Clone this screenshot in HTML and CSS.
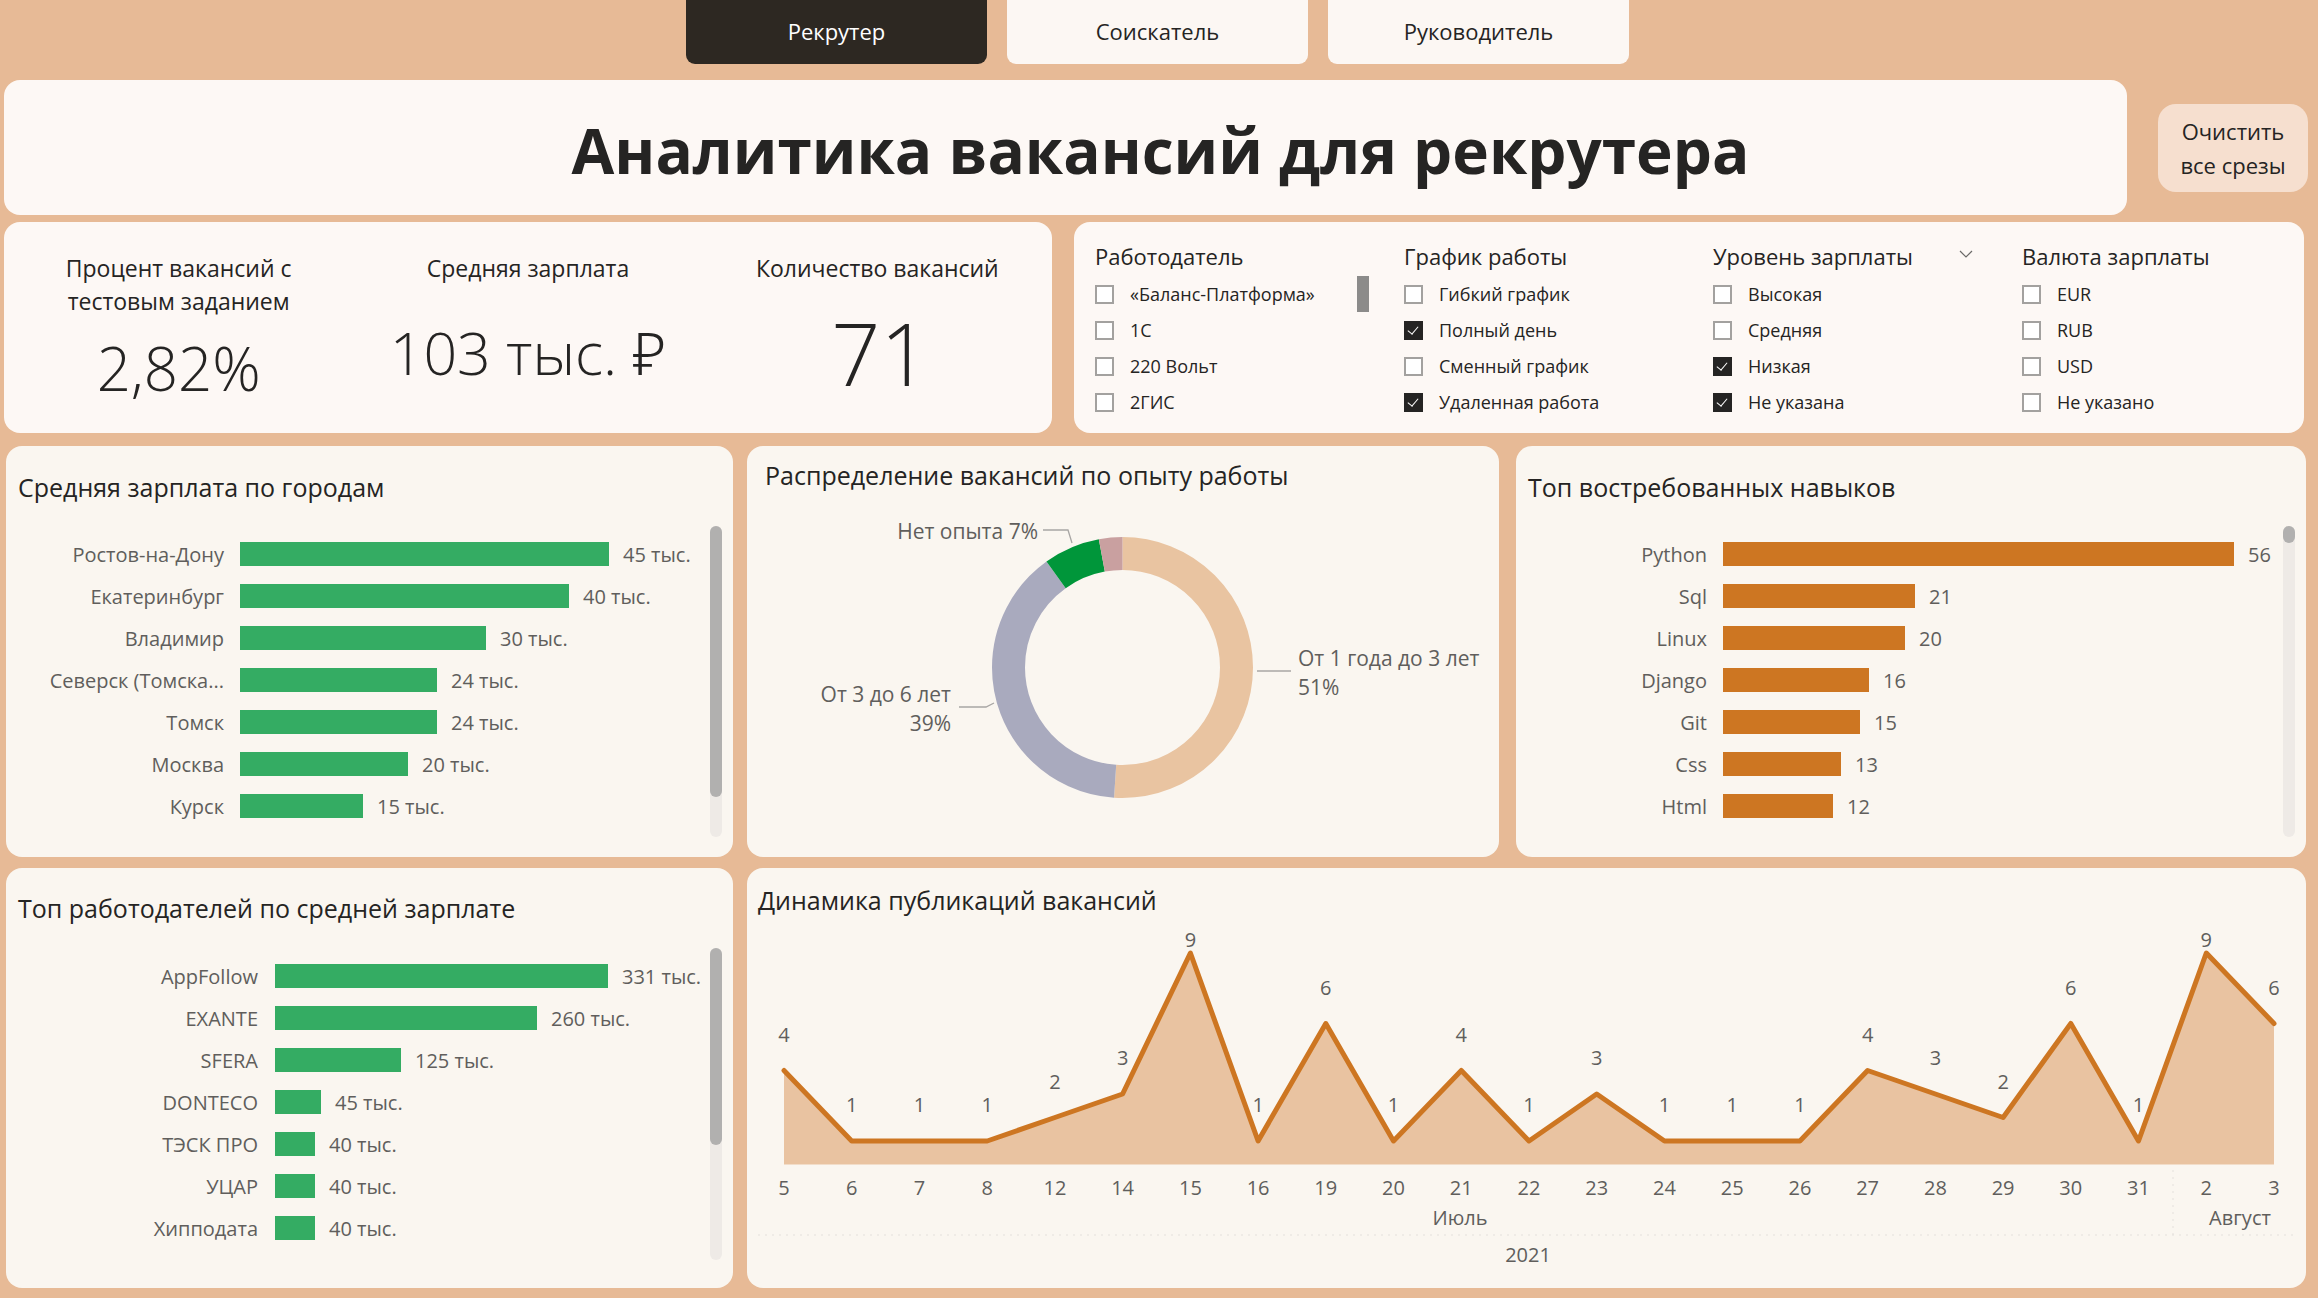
FILE: index.html
```html
<!DOCTYPE html>
<html lang="ru">
<head>
<meta charset="utf-8">
<title>Аналитика вакансий для рекрутера</title>
<link rel="stylesheet" href="styles.css">
</head>
<body>
<div class="page">
  <nav class="tabs">
    <div class="tab tab-active">Рекрутер</div>
    <div class="tab">Соискатель</div>
    <div class="tab">Руководитель</div>
  </nav>

  <header class="head-row">
    <div class="title-card"><h1>Аналитика вакансий для рекрутера</h1></div>
    <button class="clear-btn">Очистить<br>все срезы</button>
  </header>

  <section class="row kpi-row">
    <div class="card kpi-card">
      <div class="kpi">
        <div class="kpi-label">Процент вакансий с<br>тестовым заданием</div>
        <div class="kpi-value kv-1">2,82%</div>
      </div>
      <div class="kpi">
        <div class="kpi-label">Средняя зарплата</div>
        <div class="kpi-value kv-2">103 тыс. ₽</div>
      </div>
      <div class="kpi">
        <div class="kpi-label">Количество вакансий</div>
        <div class="kpi-value kv-3">71</div>
      </div>
    </div>

    <div class="card filter-card">
      <div class="slicer">
        <div class="slicer-head">Работодатель</div>
        <ul class="slicer-list">
          <li><span class="cb"></span>«Баланс-Платформа»</li>
          <li><span class="cb"></span>1С</li>
          <li><span class="cb"></span>220 Вольт</li>
          <li><span class="cb"></span>2ГИС</li>
        </ul>
        <span class="slicer-scroll"></span>
      </div>
      <div class="slicer">
        <div class="slicer-head">График работы</div>
        <ul class="slicer-list">
          <li><span class="cb"></span>Гибкий график</li>
          <li><span class="cb checked"></span>Полный день</li>
          <li><span class="cb"></span>Сменный график</li>
          <li><span class="cb checked"></span>Удаленная работа</li>
        </ul>
      </div>
      <div class="slicer">
        <div class="slicer-head head-flex"><span>Уровень зарплаты</span>
          <svg class="chev" width="14" height="9" viewBox="0 0 14 9"><polyline points="1,1 7,7 13,1" fill="none" stroke="#6b6a68" stroke-width="1.2"/></svg>
        </div>
        <ul class="slicer-list">
          <li><span class="cb"></span>Высокая</li>
          <li><span class="cb"></span>Средняя</li>
          <li><span class="cb checked"></span>Низкая</li>
          <li><span class="cb checked"></span>Не указана</li>
        </ul>
      </div>
      <div class="slicer">
        <div class="slicer-head">Валюта зарплаты</div>
        <ul class="slicer-list">
          <li><span class="cb"></span>EUR</li>
          <li><span class="cb"></span>RUB</li>
          <li><span class="cb"></span>USD</li>
          <li><span class="cb"></span>Не указано</li>
        </ul>
      </div>
    </div>
  </section>

  <section class="row mid-row">
    <div class="card chart-card city-card">
      <h2 class="card-title">Средняя зарплата по городам</h2>
      <div class="bars">
        <div class="bar-row"><span class="bar-label">Ростов-на-Дону</span><span class="bar green" style="width:369px"></span><span class="bar-value">45 тыс.</span></div>
        <div class="bar-row"><span class="bar-label">Екатеринбург</span><span class="bar green" style="width:329px"></span><span class="bar-value">40 тыс.</span></div>
        <div class="bar-row"><span class="bar-label">Владимир</span><span class="bar green" style="width:246px"></span><span class="bar-value">30 тыс.</span></div>
        <div class="bar-row"><span class="bar-label">Северск (Томска...</span><span class="bar green" style="width:197px"></span><span class="bar-value">24 тыс.</span></div>
        <div class="bar-row"><span class="bar-label">Томск</span><span class="bar green" style="width:197px"></span><span class="bar-value">24 тыс.</span></div>
        <div class="bar-row"><span class="bar-label">Москва</span><span class="bar green" style="width:168px"></span><span class="bar-value">20 тыс.</span></div>
        <div class="bar-row"><span class="bar-label">Курск</span><span class="bar green" style="width:123px"></span><span class="bar-value">15 тыс.</span></div>
      </div>
      <div class="vscroll"><span class="thumb thumb-city"></span></div>
    </div>

    <div class="card chart-card donut-card">
      <h2 class="card-title">Распределение вакансий по опыту работы</h2>
      <svg class="donut" width="752" height="365" viewBox="0 0 752 365">
        <g transform="rotate(-90 375.5 176.5)" fill="none" stroke-width="33">
          <circle cx="375.5" cy="176.5" r="114" stroke="#E9C4A1" stroke-dasharray="365.3 716.3" stroke-dashoffset="0"/>
          <circle cx="375.5" cy="176.5" r="114" stroke="#A9AABE" stroke-dasharray="279.4 716.3" stroke-dashoffset="-365.3"/>
          <circle cx="375.5" cy="176.5" r="114" stroke="#00963A" stroke-dasharray="50.1 716.3" stroke-dashoffset="-644.7"/>
          <circle cx="375.5" cy="176.5" r="114" stroke="#C9A0A0" stroke-dasharray="21.5 716.3" stroke-dashoffset="-694.8"/>
        </g>
        <g fill="none" stroke="#A8A6A4" stroke-width="1.3">
          <polyline points="296,39 321,39 325,52"/>
          <polyline points="510,180 544,180"/>
          <polyline points="212,216 239,216 247,212"/>
        </g>
        <g class="svg-label donut-label">
          <text x="291" y="40" text-anchor="end">Нет опыта 7%</text>
          <text x="551" y="167">От 1 года до 3 лет</text>
          <text x="551" y="196">51%</text>
          <text x="204" y="203" text-anchor="end">От 3 до 6 лет</text>
          <text x="204" y="232" text-anchor="end">39%</text>
        </g>
      </svg>
    </div>

    <div class="card chart-card skills-card">
      <h2 class="card-title">Топ востребованных навыков</h2>
      <div class="bars">
        <div class="bar-row"><span class="bar-label">Python</span><span class="bar orange" style="width:511px"></span><span class="bar-value">56</span></div>
        <div class="bar-row"><span class="bar-label">Sql</span><span class="bar orange" style="width:192px"></span><span class="bar-value">21</span></div>
        <div class="bar-row"><span class="bar-label">Linux</span><span class="bar orange" style="width:182px"></span><span class="bar-value">20</span></div>
        <div class="bar-row"><span class="bar-label">Django</span><span class="bar orange" style="width:146px"></span><span class="bar-value">16</span></div>
        <div class="bar-row"><span class="bar-label">Git</span><span class="bar orange" style="width:137px"></span><span class="bar-value">15</span></div>
        <div class="bar-row"><span class="bar-label">Css</span><span class="bar orange" style="width:118px"></span><span class="bar-value">13</span></div>
        <div class="bar-row"><span class="bar-label">Html</span><span class="bar orange" style="width:110px"></span><span class="bar-value">12</span></div>
      </div>
      <div class="vscroll"><span class="thumb thumb-skills"></span></div>
    </div>
  </section>

  <section class="row bottom-row">
    <div class="card chart-card emp-card">
      <h2 class="card-title">Топ работодателей по средней зарплате</h2>
      <div class="bars">
        <div class="bar-row"><span class="bar-label">AppFollow</span><span class="bar green" style="width:333px"></span><span class="bar-value">331 тыс.</span></div>
        <div class="bar-row"><span class="bar-label">EXANTE</span><span class="bar green" style="width:262px"></span><span class="bar-value">260 тыс.</span></div>
        <div class="bar-row"><span class="bar-label">SFERA</span><span class="bar green" style="width:126px"></span><span class="bar-value">125 тыс.</span></div>
        <div class="bar-row"><span class="bar-label">DONTECO</span><span class="bar green" style="width:46px"></span><span class="bar-value">45 тыс.</span></div>
        <div class="bar-row"><span class="bar-label">ТЭСК ПРО</span><span class="bar green" style="width:40px"></span><span class="bar-value">40 тыс.</span></div>
        <div class="bar-row"><span class="bar-label">УЦАР</span><span class="bar green" style="width:40px"></span><span class="bar-value">40 тыс.</span></div>
        <div class="bar-row"><span class="bar-label">Хипподата</span><span class="bar green" style="width:40px"></span><span class="bar-value">40 тыс.</span></div>
      </div>
      <div class="vscroll vscroll-emp"><span class="thumb thumb-emp"></span></div>
    </div>

    <div class="card chart-card line-card">
      <h2 class="card-title">Динамика публикаций вакансий</h2>
      <svg class="linechart" width="1559" height="372" viewBox="0 0 1559 372">
        <polygon fill="#E9C3A1" points="37,154.5 104.7,225 172.5,225 240.2,225 307.9,201.5 375.6,178 443.4,37 511.1,225 578.8,107.5 646.5,225 714.3,154.5 782,225 849.7,178 917.5,225 985.2,225 1052.9,225 1120.6,154.5 1188.4,178 1256.1,201.5 1323.8,107.5 1391.5,225 1459.3,37 1527,107.5 1527,248.5 37,248.5"/>
        <polyline fill="none" stroke="#CD7622" stroke-width="5" stroke-linejoin="round" stroke-linecap="round" points="37,154.5 104.7,225 172.5,225 240.2,225 307.9,201.5 375.6,178 443.4,37 511.1,225 578.8,107.5 646.5,225 714.3,154.5 782,225 849.7,178 917.5,225 985.2,225 1052.9,225 1120.6,154.5 1188.4,178 1256.1,201.5 1323.8,107.5 1391.5,225 1459.3,37 1527,107.5"/>
        <line x1="11" y1="319" x2="1551" y2="319" stroke="#E4E0DC" stroke-width="1" stroke-dasharray="2 5"/>
        <line x1="1426" y1="254" x2="1426" y2="319" stroke="#E4E0DC" stroke-width="1" stroke-dasharray="2 5"/>
        <g class="svg-label" text-anchor="middle">
          <text x="37" y="118">4</text>
          <text x="104.7" y="188.5">1</text>
          <text x="172.5" y="188.5">1</text>
          <text x="240.2" y="188.5">1</text>
          <text x="307.9" y="165">2</text>
          <text x="375.6" y="141.5">3</text>
          <text x="443.4" y="23">9</text>
          <text x="511.1" y="188.5">1</text>
          <text x="578.8" y="71">6</text>
          <text x="646.5" y="188.5">1</text>
          <text x="714.3" y="118">4</text>
          <text x="782" y="188.5">1</text>
          <text x="849.7" y="141.5">3</text>
          <text x="917.5" y="188.5">1</text>
          <text x="985.2" y="188.5">1</text>
          <text x="1052.9" y="188.5">1</text>
          <text x="1120.6" y="118">4</text>
          <text x="1188.4" y="141.5">3</text>
          <text x="1256.1" y="165">2</text>
          <text x="1323.8" y="71">6</text>
          <text x="1391.5" y="188.5">1</text>
          <text x="1459.3" y="23">9</text>
          <text x="1527" y="71">6</text>
        </g>
        <g class="svg-label" text-anchor="middle">
          <text x="37" y="271">5</text>
          <text x="104.7" y="271">6</text>
          <text x="172.5" y="271">7</text>
          <text x="240.2" y="271">8</text>
          <text x="307.9" y="271">12</text>
          <text x="375.6" y="271">14</text>
          <text x="443.4" y="271">15</text>
          <text x="511.1" y="271">16</text>
          <text x="578.8" y="271">19</text>
          <text x="646.5" y="271">20</text>
          <text x="714.3" y="271">21</text>
          <text x="782" y="271">22</text>
          <text x="849.7" y="271">23</text>
          <text x="917.5" y="271">24</text>
          <text x="985.2" y="271">25</text>
          <text x="1052.9" y="271">26</text>
          <text x="1120.6" y="271">27</text>
          <text x="1188.4" y="271">28</text>
          <text x="1256.1" y="271">29</text>
          <text x="1323.8" y="271">30</text>
          <text x="1391.5" y="271">31</text>
          <text x="1459.3" y="271">2</text>
          <text x="1527" y="271">3</text>
          <text x="713" y="301">Июль</text>
          <text x="1493" y="301">Август</text>
          <text x="781" y="338">2021</text>
        </g>
      </svg>
    </div>
  </section>
</div>
</body>
</html>
```

FILE: styles.css
```css
* {
  box-sizing: border-box;
  margin: 0;
  padding: 0;
}

body {
  margin: 0;
  width: 2318px;
  height: 1298px;
  overflow: hidden;
  background: #E7BA96;
  font-family: "Open Sans", "Noto Sans", "DejaVu Sans", sans-serif;
  color: #252423;
}

.page {
  display: flex;
  flex-direction: column;
}

/* tabs */
.tabs {
  display: flex;
  gap: 20px;
  padding-left: 686px;
  height: 64px;
}

.tab {
  width: 301px;
  height: 64px;
  background: #FCF7F3;
  border-radius: 0 0 9px 9px;
  display: flex;
  align-items: center;
  justify-content: center;
  font-size: 22px;
  color: #252423;
  padding-bottom: 2px;
}

.tab-active {
  background: #2D2822;
  color: #ffffff;
}

/* header */
.head-row {
  display: flex;
  align-items: center;
  margin-top: 16px;
  padding-left: 4px;
  height: 135px;
}

.title-card {
  width: 2123px;
  height: 135px;
  background: #FDF8F5;
  border-radius: 16px;
  display: flex;
  align-items: center;
  justify-content: center;
  padding-left: 190px;
  padding-top: 4px;
}

.title-card h1 {
  font-size: 62px;
  font-weight: 700;
  color: #252423;
}

.clear-btn {
  margin-left: 31px;
  width: 150px;
  height: 88px;
  background: #F6DFCF;
  border: none;
  border-radius: 18px;
  font-family: "Open Sans", "Noto Sans", sans-serif;
  font-size: 22px;
  line-height: 34px;
  color: #252423;
}

/* rows */
.row {
  display: flex;
}

.card {
  background: #FDF8F5;
  border-radius: 16px;
  position: relative;
  flex-shrink: 0;
}

.kpi-row {
  margin-top: 7px;
  height: 211px;
  padding-left: 4px;
  gap: 22px;
}

.kpi-card {
  width: 1048px;
  display: flex;
  padding-top: 30px;
}

.kpi {
  flex: 1;
  display: flex;
  flex-direction: column;
  align-items: center;
  text-align: center;
}

.kpi-label {
  font-size: 23px;
  line-height: 33px;
  color: #252423;
  white-space: nowrap;
}

.kpi-value {
  font-weight: 300;
  color: #252423;
  white-space: nowrap;
}

.kv-1 {
  font-size: 60px;
  line-height: 70px;
  margin-top: 15px;
}

.kv-2 {
  font-size: 59px;
  line-height: 70px;
  margin-top: 32px;
}

.kv-3 {
  font-size: 86px;
  line-height: 90px;
  margin-top: 23px;
  padding-left: 6px;
}

/* filters */
.filter-card {
  width: 1230px;
  display: flex;
  padding: 19px 0 0 21px;
}

.slicer {
  width: 309px;
  flex-shrink: 0;
  position: relative;
}

.slicer-head {
  font-size: 22px;
  line-height: 30px;
  color: #252423;
  white-space: nowrap;
}

.head-flex {
  display: flex;
  align-items: center;
  width: 260px;
  justify-content: space-between;
}

.chev {
  margin-top: -4px;
}

.slicer-list {
  list-style: none;
  margin-top: 5px;
}

.slicer-list li {
  height: 36px;
  display: flex;
  align-items: center;
  font-size: 18px;
  color: #252423;
  white-space: nowrap;
}

.cb {
  width: 19px;
  height: 19px;
  border: 2px solid #A3A19F;
  margin-right: 16px;
  flex-shrink: 0;
  position: relative;
  background: #ffffff;
}

.cb.checked {
  background: #252423;
  border-color: #252423;
}

.cb.checked::after {
  content: "";
  position: absolute;
  left: 4px;
  top: 1px;
  width: 5px;
  height: 9px;
  border-right: 1.5px solid #ffffff;
  border-bottom: 1.5px solid #ffffff;
  transform: rotate(40deg);
}

.slicer-scroll {
  position: absolute;
  left: 262px;
  top: 35px;
  width: 12px;
  height: 36px;
  background: #8C8B8A;
}

/* chart cards */
.mid-row {
  margin-top: 13px;
  height: 411px;
  padding-left: 6px;
}

.bottom-row {
  margin-top: 11px;
  height: 420px;
  padding-left: 6px;
  gap: 14px;
}

.chart-card {
  background: #FAF6F0;
  padding-left: 12px;
}

.card-title {
  font-size: 25px;
  font-weight: 400;
  line-height: 32px;
  color: #252423;
  white-space: nowrap;
}

.city-card {
  width: 727px;
  padding-top: 25px;
}

.donut-card {
  width: 752px;
  margin-left: 14px;
  padding-top: 13px;
  padding-left: 0;
}

.donut-card .card-title {
  padding-left: 18px;
}

.skills-card {
  width: 790px;
  margin-left: 17px;
  padding-top: 25px;
}

.emp-card {
  width: 727px;
  padding-top: 24px;
}

.line-card {
  width: 1559px;
  padding-top: 16px;
  padding-left: 0;
}

.line-card .card-title {
  padding-left: 11px;
}

.donut, .linechart {
  display: block;
}

.svg-label {
  font-family: "Open Sans", "Noto Sans", sans-serif;
  font-size: 20px;
  fill: #605E5C;
  dominant-baseline: central;
}

.donut-label {
  font-size: 21px;
}

.bars {
  margin-top: 30px;
}

.emp-card .bars {
  margin-top: 31px;
}

.bar-row {
  display: flex;
  align-items: center;
  height: 42px;
}

.bar-label {
  width: 206px;
  text-align: right;
  font-size: 20px;
  color: #605E5C;
  white-space: nowrap;
  margin-right: 16px;
}

.skills-card .bar-label {
  width: 179px;
}

.emp-card .bar-label {
  width: 240px;
  margin-right: 17px;
}

.bar {
  height: 24px;
  display: block;
}

.green {
  background: #34AC63;
}

.orange {
  background: #CD7622;
}

.bar-value {
  margin-left: 14px;
  font-size: 20px;
  color: #605E5C;
  white-space: nowrap;
}

.vscroll {
  position: absolute;
  right: 11px;
  top: 80px;
  width: 12px;
  height: 311px;
  background: #EEEAE6;
  border-radius: 6px;
}

.vscroll-emp {
  height: 312px;
}

.thumb {
  display: block;
  width: 12px;
  background: #B1B0AF;
  border-radius: 6px;
}

.thumb-city {
  height: 271px;
}

.thumb-skills {
  height: 17px;
}

.thumb-emp {
  height: 197px;
}
```
